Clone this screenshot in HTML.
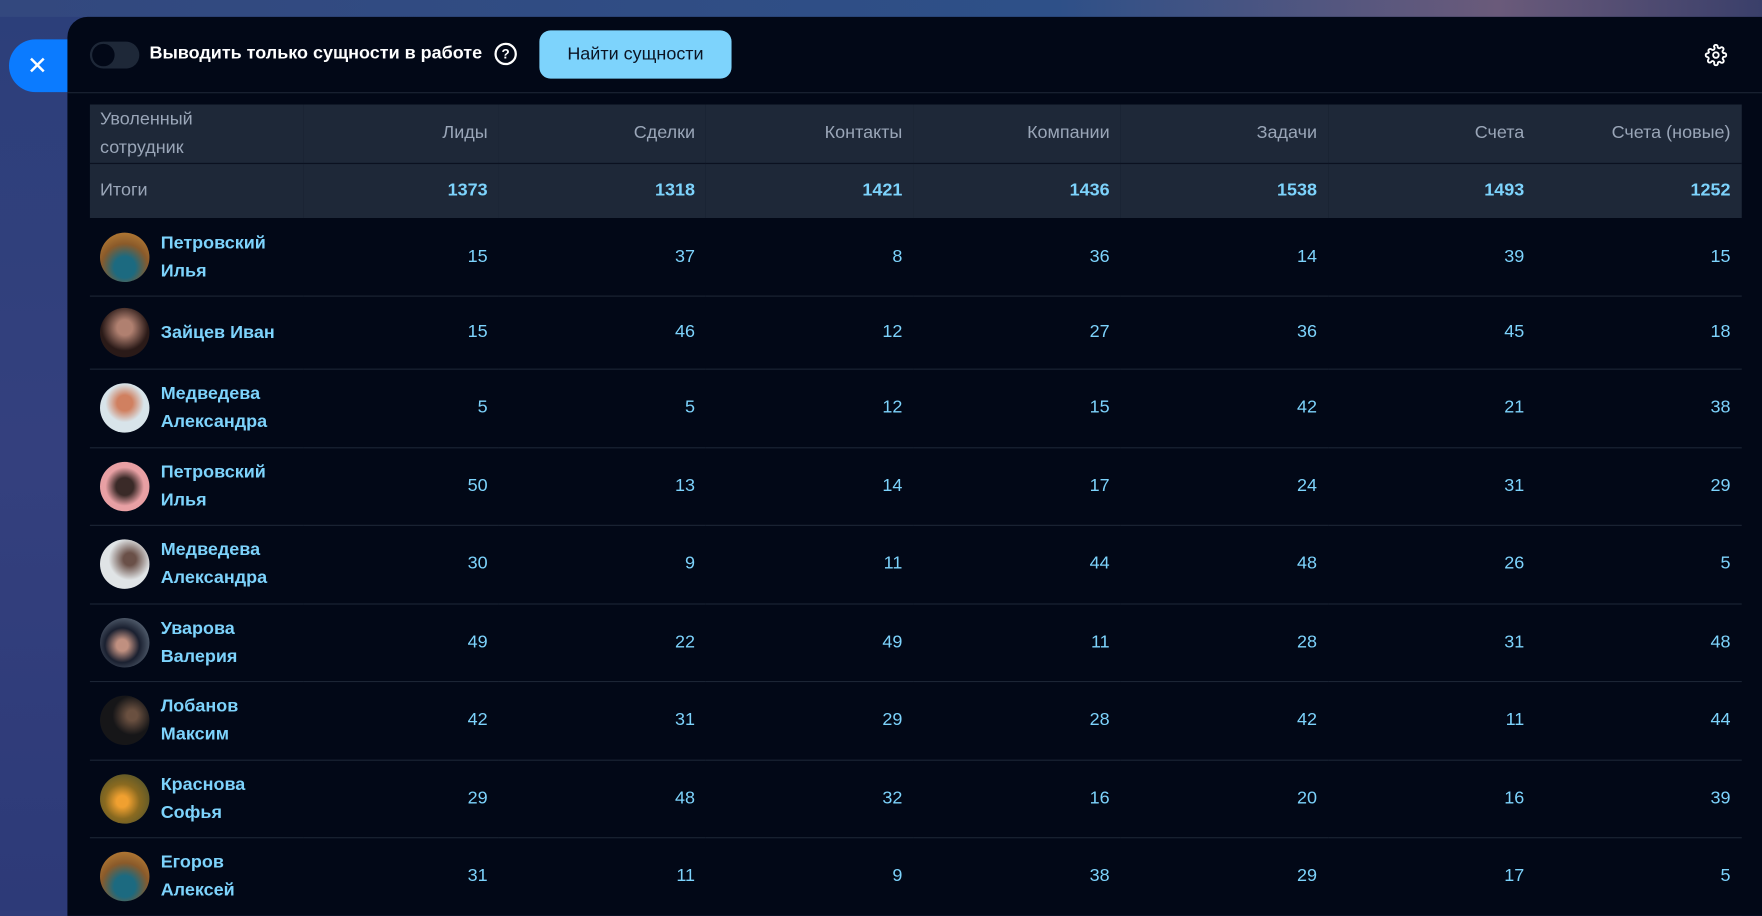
<!DOCTYPE html>
<html><head><meta charset="utf-8"><style>
*{box-sizing:border-box;margin:0;padding:0}
body{width:1762px;height:908px;overflow:hidden;background:#2f3d7a;font-family:"Liberation Sans","DejaVu Sans",sans-serif;position:relative}
#w{position:absolute;left:0;top:0;width:1568px;height:810px;transform:scale(1.12372);transform-origin:0 0;background:linear-gradient(180deg,#2c3f7a,#34407e 50%,#2d3a78)}
.top{position:absolute;left:0;top:0;width:1568px;height:15px;background:linear-gradient(90deg,#33487e,#2e5088 60%,#6a5a7a 85%,#3a3f6a)}
.close{position:absolute;left:8px;top:35px;width:60px;height:47px;background:#0b7bff;border-radius:24px 0 0 24px;color:#fff;font-size:22px;line-height:47px;padding-left:16px}
.panel{position:absolute;left:60px;top:15px;width:1508px;height:800px;background:#020817;border-radius:18px 0 0 0}
.bar{height:68px;border-bottom:1px solid #1c2535;position:relative}
.tog{position:absolute;left:20px;top:22px;width:44px;height:24px;border-radius:12px;background:#1e2838}
.tog:after{content:"";position:absolute;left:2px;top:2px;width:20px;height:20px;border-radius:50%;background:#020817}
.lbl{position:absolute;left:73px;top:24px;color:#fff;font-weight:bold;font-size:16px}
.q{position:absolute;left:380px;top:23px;width:20px;height:20px;border:2px solid #fff;border-radius:50%;color:#fff;font-size:12px;font-weight:bold;text-align:center;line-height:16px}
.btn{position:absolute;left:420px;top:12px;width:171px;height:43px;background:#7dd3fc;border-radius:10px;color:#0b1424;font-size:16px;text-align:center;line-height:43px}
.gear{position:absolute;left:1457px;top:24px}
table{position:absolute;left:20px;top:78px;width:1470px;border-collapse:collapse;border-spacing:0;font-size:16px}
th,td{text-align:right;padding:0 10px 0 0}
th:first-child,td:first-child{text-align:left;padding-left:9px}
thead th{background:#1e2838;height:52px}
th{color:#9aa6b8;font-weight:normal;line-height:25px;border-bottom:1px solid #0b1120}
tr.tot td{background:#1e2838;height:49px;color:#7dd3fc;font-weight:bold}
tr.tot td:first-child{color:#9aa6b8;font-weight:normal}
tbody tr.r{height:69.5px;border-bottom:1px solid #1c2535}
tbody tr.s{height:65px}
td{color:#7dd3fc}
.n{display:flex;align-items:center;gap:10px;color:#7dd3fc;font-weight:bold;line-height:25px;width:170px}
.av{width:44px;height:44px;border-radius:50%;flex:none}
</style></head><body><div id="w">
<div class="top"></div>
<div class="close">✕</div>
<div class="panel">
<div class="bar"><div class="tog"></div><div class="lbl">Выводить только сущности в работе</div><div class="q">?</div><div class="btn">Найти сущности</div>
<svg class="gear" width="20" height="20" viewBox="0 0 24 24" fill="none" stroke="#fff" stroke-width="2"><circle cx="12" cy="12" r="3"/><path d="M19.4 15a1.65 1.65 0 0 0 .33 1.82l.06.06a2 2 0 1 1-2.83 2.830l-.06-.06a1.65 1.65 0 0 0-2.82 1.17V21a2 2 0 1 1-4 0v-.09A1.65 1.65 0 0 0 6.9 19.4l-.06.06a2 2 0 1 1-2.83-2.830l.06-.06A1.65 1.65 0 0 0 3 14.1H3a2 2 0 1 1 0-4h.09A1.65 1.65 0 0 0 4.6 8.9l-.06-.06a2 2 0 1 1 2.83-2.830l.06.06A1.65 1.65 0 0 0 9.9 3V3a2 2 0 1 1 4 0v.09a1.65 1.65 0 0 0 2.8 1.2l.06-.06a2 2 0 1 1 2.83 2.830l-.06.06A1.65 1.65 0 0 0 21 9.9h.1a2 2 0 1 1 0 4H21a1.65 1.65 0 0 0-1.6 1.1z"/></svg></div>
<table>
<colgroup><col style="width:187px"><col style="width:174px"><col style="width:184px"><col style="width:184px"><col style="width:184px"><col style="width:184px"><col style="width:184px"><col style="width:183px"></colgroup>
<thead><tr><th>Уволенный<br>сотрудник</th><th>Лиды</th><th>Сделки</th><th>Контакты</th><th>Компании</th><th>Задачи</th><th>Счета</th><th>Счета (новые)</th></tr></thead>
<tbody>
<tr class="tot"><td>Итоги</td><td>1373</td><td>1318</td><td>1421</td><td>1436</td><td>1538</td><td>1493</td><td>1252</td></tr>
<tr class="r"><td><div class="n"><div class="av" style="background:radial-gradient(circle at 50% 70%,#1c6a80 25%,#8a5a2a 55%,#c98a3a)"></div>Петровский<br>Илья</div></td><td>15</td><td>37</td><td>8</td><td>36</td><td>14</td><td>39</td><td>15</td></tr>
<tr class="r s"><td><div class="n"><div class="av" style="background:radial-gradient(circle at 50% 40%,#b08070 20%,#2a1a18 60%)"></div>Зайцев Иван</div></td><td>15</td><td>46</td><td>12</td><td>27</td><td>36</td><td>45</td><td>18</td></tr>
<tr class="r"><td><div class="n"><div class="av" style="background:radial-gradient(circle at 50% 40%,#d08060 20%,#d8e4ea 50%)"></div>Медведева<br>Александра</div></td><td>5</td><td>5</td><td>12</td><td>15</td><td>42</td><td>21</td><td>38</td></tr>
<tr class="r"><td><div class="n"><div class="av" style="background:radial-gradient(circle at 50% 50%,#3a2a28 25%,#e8a0a4 55%)"></div>Петровский<br>Илья</div></td><td>50</td><td>13</td><td>14</td><td>17</td><td>24</td><td>31</td><td>29</td></tr>
<tr class="r"><td><div class="n"><div class="av" style="background:radial-gradient(circle at 60% 40%,#6a5048 15%,#e0e4e6 50%)"></div>Медведева<br>Александра</div></td><td>30</td><td>9</td><td>11</td><td>44</td><td>48</td><td>26</td><td>5</td></tr>
<tr class="r"><td><div class="n"><div class="av" style="background:radial-gradient(circle at 45% 55%,#c09080 15%,#1a2030 45%,#8090a0)"></div>Уварова<br>Валерия</div></td><td>49</td><td>22</td><td>49</td><td>11</td><td>28</td><td>31</td><td>48</td></tr>
<tr class="r"><td><div class="n"><div class="av" style="background:radial-gradient(circle at 65% 40%,#6a5040 12%,#161618 45%)"></div>Лобанов<br>Максим</div></td><td>42</td><td>31</td><td>29</td><td>28</td><td>42</td><td>11</td><td>44</td></tr>
<tr class="r"><td><div class="n"><div class="av" style="background:radial-gradient(circle at 45% 55%,#f0a030 15%,#8a6a20 45%,#3a4a30)"></div>Краснова<br>Софья</div></td><td>29</td><td>48</td><td>32</td><td>16</td><td>20</td><td>16</td><td>39</td></tr>
<tr class="r"><td><div class="n"><div class="av" style="background:radial-gradient(circle at 50% 70%,#1c6a80 25%,#8a5a2a 55%,#c98a3a)"></div>Егоров<br>Алексей</div></td><td>31</td><td>11</td><td>9</td><td>38</td><td>29</td><td>17</td><td>5</td></tr>
</tbody></table>
</div>
</div></body></html>
